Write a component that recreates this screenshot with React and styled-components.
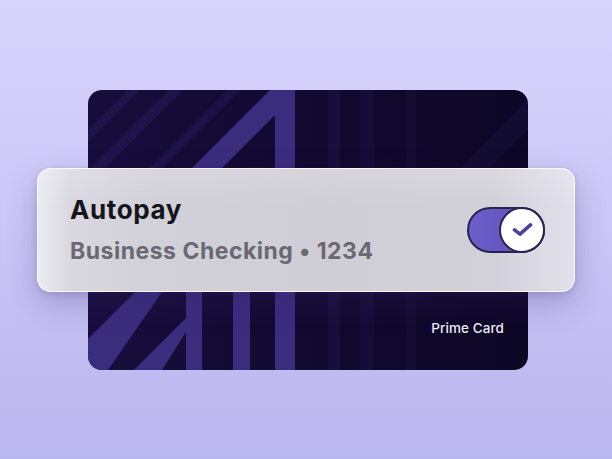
import React from "react";
import styled, { createGlobalStyle } from "styled-components";

const GlobalStyle = createGlobalStyle`
  html, body {
    margin: 0;
    padding: 0;
    font-family: Inter, "Noto Sans", sans-serif;
  }
`;

const Page = styled.div`
  width: 612px;
  height: 459px;
  background: linear-gradient(180deg, #d9d4fd 0%, #cac6f6 50%, #bab6ee 100%);
  display: grid;
  place-items: center;
  overflow: hidden;
`;

const Stage = styled.div`
  display: grid;
  place-items: center;

  & > * {
    grid-area: 1 / 1;
  }
`;

const Card = styled.div`
  position: relative;
  width: 440px;
  height: 280px;
  box-sizing: border-box;
  border-radius: 14px;
  overflow: hidden;
  background: linear-gradient(90deg, #170e3d 0%, #120a31 45%, #0d0726 100%);
  display: flex;
  align-items: flex-end;
  justify-content: flex-end;
  padding: 0 24px 34px 0;
  transform: translate(2px, 0);
`;

const Pattern = styled.svg`
  position: absolute;
  inset: 0;
  width: 100%;
  height: 100%;
`;

const CardLabel = styled.span`
  position: relative;
  font-size: 13.5px;
  font-weight: 500;
  color: #eeecf8;
  letter-spacing: 0.1px;
`;

const Panel = styled.div`
  width: 538px;
  height: 124px;
  box-sizing: border-box;
  border-radius: 14px;
  display: flex;
  align-items: center;
  justify-content: space-between;
  padding: 0 30px 0 32px;
  background:
    linear-gradient(180deg, rgba(255, 255, 255, 0.16) 0%, rgba(255, 255, 255, 0) 30%),
    linear-gradient(90deg, #ecebf4 0%, #d9d7e0 6%, #d2d0d8 20%, #cfcdd5 55%, #d2d0d9 85%, #e2e0ea 100%);
  border: 1.5px solid rgba(255, 255, 255, 0.85);
  box-shadow: 0 12px 30px rgba(50, 40, 110, 0.26), 0 2px 6px rgba(50, 40, 110, 0.14);
  z-index: 1;
`;

const TextGroup = styled.div`
  display: flex;
  flex-direction: column;
  gap: 13px;
  margin-top: 1px;
`;

const Title = styled.div`
  font-size: 26px;
  line-height: 1.2;
  font-weight: 700;
  letter-spacing: 0.6px;
  color: #16151c;
`;

const Subtitle = styled.div`
  font-size: 23px;
  line-height: 1.2;
  font-weight: 700;
  letter-spacing: 0.5px;
  color: #6a6973;
`;

const Toggle = styled.div`
  width: 78px;
  height: 46px;
  box-sizing: border-box;
  border-radius: 23px;
  border: 2px solid #2a2352;
  background: linear-gradient(90deg, #6d5ec9 0%, #5e4eb8 100%);
  display: flex;
  align-items: center;
  justify-content: flex-end;
  margin-right: -1px;
`;

const Knob = styled.div`
  width: 46px;
  height: 46px;
  margin-right: -2px;
  box-sizing: border-box;
  border-radius: 50%;
  border: 2px solid #2a2352;
  background: #ffffff;
  display: flex;
  align-items: center;
  justify-content: center;
`;

const BAND = "#3b2d7e";
const FAINT = "rgba(70, 52, 150, 0.18)";

const CardArt = () => (
  <Pattern viewBox="0 0 440 280" preserveAspectRatio="none">
    <polygon points="0,40 40,0 52,0 0,52" fill={FAINT} />
    <polygon points="0,80 80,0 95,0 0,95" fill={FAINT} />
    <polygon points="20,120 140,0 152,0 32,120" fill={FAINT} />
    <rect x="240" y="0" width="12" height="280" fill="rgba(60, 45, 130, 0.16)" />
    <rect x="272" y="0" width="14" height="280" fill="rgba(60, 45, 130, 0.12)" />
    <rect x="318" y="0" width="10" height="280" fill="rgba(60, 45, 130, 0.1)" />
    <polygon points="330,120 440,10 440,40 350,130" fill="rgba(60, 45, 130, 0.12)" />
    <polygon points="182,0 207,0 207,280 187,280 187,25 100,112 70,112" fill={BAND} />
    <polygon points="0,249 50,199 76,199 20,280 0,280" fill={BAND} />
    <polygon points="46,280 98,228 98,190 114,190 114,280 98,280 98,242 74,280" fill={BAND} />
    <rect x="145" y="190" width="17" height="90" fill={BAND} />
  </Pattern>
);

const CheckIcon = () => (
  <svg width="21" height="15" viewBox="0 0 21 15" fill="none">
    <path
      d="M2.5 7.8 L8 12.2 L18.5 2.8"
      stroke="#4f3f9f"
      strokeWidth="3.6"
      strokeLinecap="round"
      strokeLinejoin="round"
    />
  </svg>
);

export default function App() {
  return (
    <>
      <GlobalStyle />
      <Page>
        <Stage>
          <Card>
            <CardArt />
            <CardLabel>Prime Card</CardLabel>
          </Card>
          <Panel>
            <TextGroup>
              <Title>Autopay</Title>
              <Subtitle>Business Checking • 1234</Subtitle>
            </TextGroup>
            <Toggle>
              <Knob>
                <CheckIcon />
              </Knob>
            </Toggle>
          </Panel>
        </Stage>
      </Page>
    </>
  );
}
